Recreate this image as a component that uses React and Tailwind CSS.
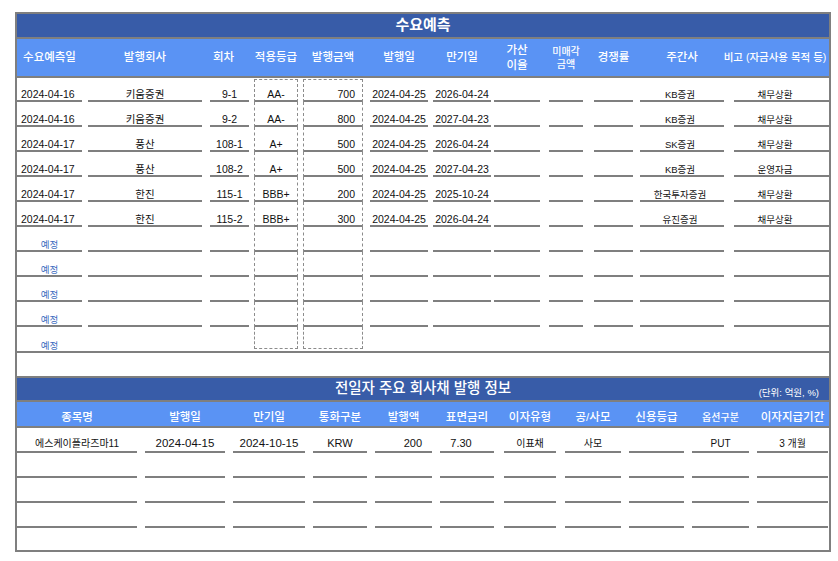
import React from "react";

// column slots (margin-left + width) for the 수요예측 table
const TOP_COLS = [
  "w-[65px]",
  "ml-[6px] w-[114px]",
  "ml-[8px] w-[39px]",
  "ml-[5px] w-[44px]",
  "ml-[5px] w-[60px]",
  "ml-[7px] w-[58px]",
  "ml-[5px] w-[58px]",
  "ml-[3px] w-[46px]",
  "ml-[9px] w-[34px]",
  "ml-[11px] w-[39px]",
  "ml-[7px] w-[84px]",
  "ml-[10px] w-[95px]",
];

// text style per column for data rows
const TOP_TEXT = [
  "text-[10.5px] justify-start pl-[4px] text-[#111]",
  "text-[10.5px] justify-center text-[#111]",
  "text-[10.5px] justify-center text-[#111]",
  "text-[10.5px] justify-center text-[#111]",
  "text-[10.5px] justify-end pr-[7px] text-[#111]",
  "text-[10.5px] justify-center text-[#111]",
  "text-[10.5px] justify-center text-[#111]",
  "justify-center",
  "justify-center",
  "justify-center",
  "text-[9.5px] justify-center pr-[4px] text-[#111]",
  "text-[9.5px] justify-center pr-[13px] text-[#111]",
];

const PLAN_TEXT = "text-[9.5px] justify-center text-[#3d6cc0]";

const BOTTOM_COLS = [
  "w-[120px]",
  "ml-[8px] w-[80px]",
  "ml-[8px] w-[72px]",
  "ml-[8px] w-[54px]",
  "ml-[8px] w-[57px]",
  "ml-[8px] w-[54px]",
  "ml-[10px] w-[52px]",
  "ml-[9px] w-[56px]",
  "ml-[8px] w-[55px]",
  "ml-[8px] w-[57px]",
  "ml-[8px] w-[71px]",
];

const BOTTOM_TEXT = [
  "text-[10px] justify-center",
  "text-[11.5px] justify-center",
  "text-[11.5px] justify-center",
  "text-[11px] justify-center",
  "text-[11px] justify-end pr-[10px]",
  "text-[11px] justify-center pr-[12px]",
  "text-[10px] justify-center",
  "text-[10px] justify-center",
  "justify-center",
  "text-[10px] justify-center",
  "text-[10px] justify-center",
];

const forecasts = [
  ["2024-04-16", "키움증권", "9-1", "AA-", "700", "2024-04-25", "2026-04-24", "", "", "", "KB증권", "채무상환"],
  ["2024-04-16", "키움증권", "9-2", "AA-", "800", "2024-04-25", "2027-04-23", "", "", "", "KB증권", "채무상환"],
  ["2024-04-17", "풍산", "108-1", "A+", "500", "2024-04-25", "2026-04-24", "", "", "", "SK증권", "채무상환"],
  ["2024-04-17", "풍산", "108-2", "A+", "500", "2024-04-25", "2027-04-23", "", "", "", "KB증권", "운영자금"],
  ["2024-04-17", "한진", "115-1", "BBB+", "200", "2024-04-25", "2025-10-24", "", "", "", "한국투자증권", "채무상환"],
  ["2024-04-17", "한진", "115-2", "BBB+", "300", "2024-04-25", "2026-04-24", "", "", "", "유진증권", "채무상환"],
];

const issues = [
  ["에스케이플라즈마11", "2024-04-15", "2024-10-15", "KRW", "200", "7.30", "이표채", "사모", "", "PUT", "3 개월"],
  ["", "", "", "", "", "", "", "", "", "", ""],
  ["", "", "", "", "", "", "", "", "", "", ""],
  ["", "", "", "", "", "", "", "", "", "", ""],
];

const LINE = "border-[#7f7f7f]";

function TopRow({ cells, height, first, last, merge }) {
  return (
    <div className={`flex ${height}`}>
      {TOP_COLS.map((col, i) => {
        let slot = col;
        if (merge && i === 6) slot = "ml-[5px] w-[61px]";
        if (merge && i === 7) slot = "w-[46px]";
        const text = cells[i];
        const textCls = text === "예정" ? PLAN_TEXT : TOP_TEXT[i];
        const inner = (
          <div
            className={`flex h-full items-end pb-[1px] leading-none whitespace-nowrap ${textCls} ${
              last ? "" : `border-b-2 border-solid ${LINE}`
            }`}
          >
            {text}
          </div>
        );
        if (i === 3 || i === 4) {
          return (
            <div
              key={i}
              className={`shrink-0 border-x border-dashed border-[#8c8c8c] ${slot} ${
                first ? "mt-[1px] border-t" : ""
              } ${last ? "mb-[2px] border-b" : ""}`}
            >
              {inner}
            </div>
          );
        }
        return (
          <div key={i} className={`shrink-0 ${slot}`}>
            {inner}
          </div>
        );
      })}
    </div>
  );
}

const topHeads = [
  { label: "수요예측일", cls: "text-[11.5px]" },
  { label: "발행회사", cls: "text-[11.5px]" },
  { label: "회차", cls: "text-[11.5px] pr-[12px]" },
  { label: "적용등급", cls: "text-[11.5px]" },
  { label: "발행금액", cls: "text-[11.5px]" },
  { label: "발행일", cls: "text-[11.5px]" },
  { label: "만기일", cls: "text-[11.5px]" },
  { label: ["가산", "이율"], cls: "text-[11.5px] leading-[15px]" },
  { label: ["미매각", "금액"], cls: "text-[10px] leading-[13px]" },
  { label: "경쟁률", cls: "text-[11.5px]" },
  { label: "주간사", cls: "text-[11.5px]" },
  { label: "비고 (자금사용 목적 등)", cls: "text-[10.5px] pr-[13px]" },
];

const bottomHeads = [
  "종목명",
  "발행일",
  "만기일",
  "통화구분",
  "발행액",
  "표면금리",
  "이자유형",
  "공/사모",
  "신용등급",
  "옵션구분",
  "이자지급기간",
];

const App = () => {
  const planRows = [0, 1, 2, 3, 4];

  return (
    <div className="min-h-screen bg-white pt-[12px] pl-[15px] font-['Liberation_Sans','Noto_Sans_CJK_KR',sans-serif]">
      <div className={`w-[816px] border-2 ${LINE}`}>
        {/* 수요예측 title */}
        <div className={`flex h-[25px] items-center justify-center border-b-2 ${LINE} bg-[#385ca8] text-[15px] font-bold text-white`}>
          수요예측
        </div>

        {/* column headers */}
        <div className={`flex h-[39px] border-b-2 ${LINE} bg-[#5a93f4] text-white`}>
          {topHeads.map((h, i) => (
            <div
              key={i}
              className={`flex shrink-0 flex-col items-center justify-center whitespace-nowrap font-medium ${h.cls} ${TOP_COLS[i]}`}
            >
              {Array.isArray(h.label) ? h.label.map((l) => <span key={l}>{l}</span>) : h.label}
            </div>
          ))}
        </div>

        {/* forecast rows */}
        {forecasts.map((r, i) => (
          <TopRow key={i} cells={r} height={i === 0 ? "h-[24px]" : "h-[25px]"} first={i === 0} />
        ))}
        {planRows.map((p) => {
          const cells = ["예정", "", "", "", "", "", "", "", "", "", "", ""];
          if (p === 4) {
            return (
              <div key={p} className={`border-b-2 ${LINE}`}>
                <TopRow cells={cells} height="h-[24px]" last />
              </div>
            );
          }
          return <TopRow key={p} cells={cells} height="h-[25px]" merge={p === 3} />;
        })}

        <div className="h-[23px]" />

        {/* 전일자 주요 회사채 발행 정보 */}
        <div className={`relative flex h-[26px] items-center justify-center border-y-2 ${LINE} bg-[#385ca8] text-white`}>
          <span className="text-[14.5px] font-medium">전일자 주요 회사채 발행 정보</span>
          <span className="absolute right-[10px] bottom-[3px] text-[9.5px] leading-none">(단위: 억원, %)</span>
        </div>

        <div className={`flex h-[26px] border-b-2 ${LINE} bg-[#5a93f4] text-white`}>
          {bottomHeads.map((h, i) => (
            <div
              key={h}
              className={`flex shrink-0 items-end justify-center whitespace-nowrap pb-[3px] leading-none font-medium ${
                i === 9 ? "text-[10px]" : "text-[11.5px]"
              } ${BOTTOM_COLS[i]}`}
            >
              {h}
            </div>
          ))}
        </div>

        {issues.map((r, ri) => (
          <div key={ri} className="flex h-[25px]">
            {BOTTOM_COLS.map((col, i) => (
              <div
                key={i}
                className={`flex shrink-0 items-end whitespace-nowrap border-b-2 ${LINE} pb-[2px] leading-none text-[#111] ${col} ${BOTTOM_TEXT[i]}`}
              >
                {r[i]}
              </div>
            ))}
          </div>
        ))}
        <div className="h-[22px]" />
      </div>
    </div>
  );
};

export default App;
